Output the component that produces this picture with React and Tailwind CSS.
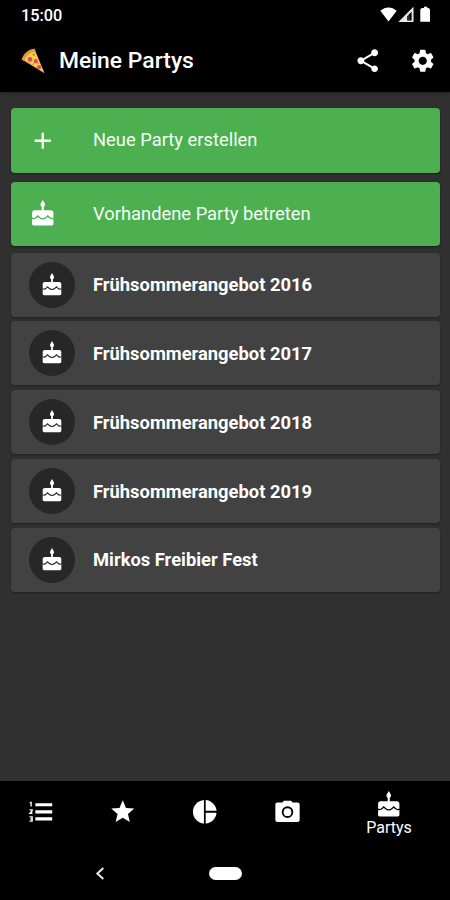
import { MdShare, MdSettings, MdAdd, MdStar } from "react-icons/md";

const parties = [
  "Frühsommerangebot 2016",
  "Frühsommerangebot 2017",
  "Frühsommerangebot 2018",
  "Frühsommerangebot 2019",
  "Mirkos Freibier Fest",
];

function Pizza() {
  return (
    <svg className="h-[26px] w-[25px]" viewBox="0 0 25 26">
      <path d="M1 11.5C3 6.500 7.500 2 13.500 1L23.500 25.300Z" fill="#f9b73f" />
      <path d="M3.500 11.500C5.500 8 9 5 13.500 4L22.500 23.800Z" fill="#fdd053" />
      <path d="M.6 11.800C2 6 7.500 1 13.800.700L14.600 3.200C9 4 5 7.700 3.300 12.900Z" fill="#e39a3c" />
      <circle cx="9" cy="11.500" r="2.400" fill="#dc4d65" />
      <circle cx="14.800" cy="13.200" r="2.200" fill="#dc4d65" />
      <circle cx="18" cy="19.200" r="2.100" fill="#dc4d65" />
      <circle cx="12.700" cy="6.700" r="1.100" fill="#a88232" />
      <path d="M11.500 16.300l1.300-.4M17.200 14.800l.7 1" stroke="#8f8233" />
    </svg>
  );
}

function StatusIcons() {
  return (
    <svg className="h-[18px] w-[54px]" viewBox="0 0 54 18">
      <path d="M1.300 4.800C6.300.300 12.700.300 17.700 4.800L9.500 15.500Z" fill="white" />
      <path d="M34.500.800V16H19.300Z" fill="#e8e8e8" />
      <path d="M32.600 5.800V14.500H28.200V10.200Z" fill="black" />
      <path d="M29.900 8.600V14.600" stroke="#777" strokeWidth=".7" />
      <path d="M44 2H45V.800H48.300V2H49.300Q51 2.300 51 4V15.800H41.300V4Q41.300 2.300 43 2Z" fill="white" />
    </svg>
  );
}

function Cake({ className }) {
  return (
    <svg className={className} viewBox="0 0 24 24" fill="none">
      <path d="M12 0 10.300 2.900C9.600 4.100 10.200 5.700 11.100 6V9H5C3.500 9 2.700 9.900 2.700 11.300V20.800C2.700 21.700 3.200 22.200 4.100 22.200H19.900C20.800 22.200 21.300 21.700 21.300 20.800V11.300C21.300 9.900 20.500 9 19 9H12.900V6C13.800 5.700 14.400 4.100 13.700 2.900Z" fill="white" />
      <path d="M2.500 15.800C4.300 16.600 5.500 16 6.200 15.200L7.600 13.900 9.100 15.300C10.800 16.700 13.200 16.700 14.900 15.300L16.400 13.900 17.800 15.200C18.500 16 19.700 16.600 21.500 15.800" stroke="currentColor" strokeWidth="1.150" />
    </svg>
  );
}

function NumberedList() {
  return (
    <svg className="size-[27.500px]" viewBox="0 0 24 24" fill="none" stroke="white">
      <path d="M2.400 3.900H3.600V7.400M2.200 10.300H4.500V11.100L2.500 13.300H4.800M2.200 16.500H4.500V20.200H2.200M3 18.300H4.500" strokeWidth="1.150" />
      <path d="M7.300 5.900H22M7.300 12.100H22M7.300 18.200H22" strokeWidth="2.700" />
    </svg>
  );
}

function Pie() {
  return (
    <svg className="size-[27.500px]" viewBox="0 0 24 24" fill="white">
      <path d="M11.300 1.700V22.300C6 21.900 1.700 17.500 1.700 12S6 2.100 11.300 1.700Z" />
      <path d="M12.800 1.700C17.800 2.100 21.900 6.200 22.300 11.200H12.800Z" />
      <path d="M12.800 12.800H22.300C21.900 17.800 17.800 21.900 12.800 22.300Z" />
    </svg>
  );
}

function Camera() {
  return (
    <svg className="h-[27px] w-[27px]" viewBox="0 0 24 24">
      <path d="M8.800 1.500 7.500 3H3.300C2 3 1.200 3.800 1.200 5V18.500C1.200 19.800 2 20.500 3.300 20.500H20.700C22 20.500 22.800 19.800 22.800 18.500V5C22.800 3.800 22 3 20.700 3H16.500L15.200 1.500Z" fill="white" />
      <circle cx="12" cy="11.700" r="4.300" fill="white" stroke="black" strokeWidth="1.700" />
    </svg>
  );
}

function ActionButton({ icon: Icon, iconClass, label }) {
  return (
    <button className="flex h-[64.500px] items-center rounded-[4px] bg-[#4caf50] pl-[18px] text-left text-[18.350px] text-[#f3fff3] shadow-[0_1px_2px_rgba(0,0,0,0.5)]">
      <span className="w-[64.500px]"><Icon className={iconClass} /></span>
      <span>{label}</span>
    </button>
  );
}

export default function App() {
  return (
    <div className="flex h-[900px] w-[450px] flex-col overflow-hidden bg-[#303030] font-['Roboto',sans-serif] text-white">
      <header className="h-[92px] shrink-0 bg-black shadow-[0_1px_3px_rgba(0,0,0,0.35)]">
        <div className="flex h-[30px] items-center justify-between pr-[17px] pl-[21px]">
          <span className="pt-[2px] text-[16.300px] font-medium">15:00</span>
          <StatusIcons />
        </div>
        <div className="flex h-[61px] items-center pr-[14px] pl-[20.500px]">
          <Pizza />
          <h1 className="ml-[13.500px] flex-1 pt-[2px] text-[22.900px] font-medium">Meine Partys</h1>
          <MdShare className="size-[27.500px]" />
          <MdSettings className="ml-[27.500px] size-[27.500px]" />
        </div>
      </header>
      <main className="flex flex-1 flex-col px-[10.500px] pt-4">
        <div className="flex flex-col gap-[9px]">
          <ActionButton icon={MdAdd} iconClass="size-[27.500px] text-white" label="Neue Party erstellen" />
          <ActionButton icon={Cake} iconClass="size-[27.500px] text-[#4caf50]" label="Vorhandene Party betreten" />
        </div>
        <ul className="mt-[6.500px] flex flex-col gap-[4.800px]">
          {parties.map((name) => (
            <li key={name} className="flex h-[64px] items-center rounded-[4px] bg-[#424242] pl-[18px] shadow-[0_1px_2px_rgba(0,0,0,0.35)]">
              <span className="mr-[18.500px] flex size-[46px] items-center justify-center rounded-full bg-[#272727]">
                <Cake className="size-[24px] text-[#272727]" />
              </span>
              <span className="pt-px text-[18.350px] font-bold">{name}</span>
            </li>
          ))}
        </ul>
      </main>
      <nav className="flex h-[62px] shrink-0 bg-black">
        <div className="flex w-[82px] items-center justify-center"><NumberedList /></div>
        <div className="flex w-[82px] items-center justify-center"><MdStar className="size-[27.500px]" /></div>
        <div className="flex w-[82px] items-center justify-center"><Pie /></div>
        <div className="flex w-[82px] items-center justify-center"><Camera /></div>
        <div className="flex flex-1 flex-col items-center pt-[9.500px]">
          <Cake className="size-[27.500px] text-black" />
          <span className="-mt-[0.500px] text-[16px] leading-[20px]">Partys</span>
        </div>
      </nav>
      <footer className="flex h-[57px] shrink-0 items-start bg-black pt-[24px] pl-[95px]">
        <svg className="h-[13px] w-[10px]" viewBox="0 0 10 13" fill="none" stroke="#eee" strokeWidth="1.900">
          <path d="M8.300 1 2.300 6.500 8.300 12" />
        </svg>
        <span className="ml-[104px] h-[12.500px] w-[33px] rounded-full bg-white" />
      </footer>
    </div>
  );
}
